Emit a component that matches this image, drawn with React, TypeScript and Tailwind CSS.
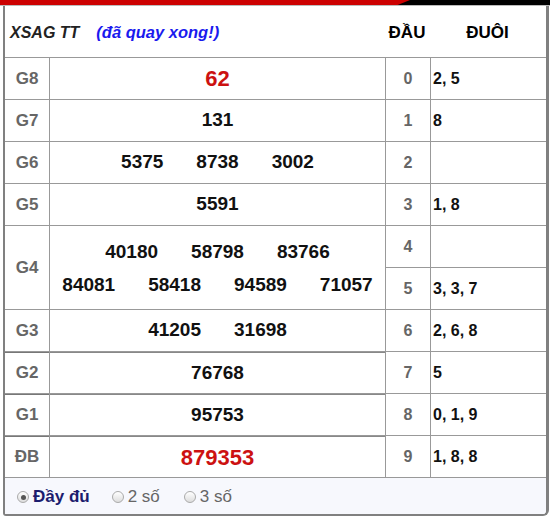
const font = "font-['Liberation_Sans',Arial,sans-serif]"

const leftRows = [
  { label: "G8", nums: ["62"], red: true },
  { label: "G7", nums: ["131"] },
  { label: "G6", nums: ["5375", "8738", "3002"] },
  { label: "G5", nums: ["5591"] },
]

const tails: [string, string][] = [
  ["0", "2, 5"],
  ["1", "8"],
  ["2", ""],
  ["3", "1, 8"],
  ["4", ""],
  ["5", "3, 3, 7"],
  ["6", "2, 6, 8"],
  ["7", "5"],
  ["8", "0, 1, 9"],
  ["9", "1, 8, 8"],
]

function Label({ text }: { text: string }) {
  return (
    <div className="bg-white flex items-center justify-center text-[17px] font-bold text-[#666]">
      {text}
    </div>
  )
}

function Nums({ nums, red }: { nums: string[]; red?: boolean }) {
  return (
    <div
      className={`bg-white flex items-center justify-center gap-[33px] font-bold ${
        red ? "text-[22px] text-[#cc1111]" : "text-[19px] text-[#111]"
      }`}
    >
      {nums.map((n) => (
        <span key={n}>{n}</span>
      ))}
    </div>
  )
}

function Radio({ checked }: { checked?: boolean }) {
  return (
    <span className="inline-flex w-[12px] h-[12px] rounded-full border border-[#aaa] bg-gradient-to-b from-white to-[#ddd] items-center justify-center mr-[4px]">
      {checked && <span className="w-[5px] h-[5px] rounded-full bg-[#555]" />}
    </span>
  )
}

export default function App() {
  return (
    <div className={`w-[550px] h-[518px] bg-white ${font}`}>
      {/* top bar */}
      <div className="h-[6px] bg-black relative border-b border-[#bbb]">
        <div className="absolute left-0 top-0 h-[5px] w-[410px] bg-[#cc0000] [clip-path:polygon(0_0,100%_0,97%_100%,0_100%)]" />
      </div>

      <div className="ml-[3px] w-[546px] h-[510px] border-l-2 border-r-[3px] border-b-2 border-[#808080] rounded-br-[6px] rounded-bl-[3px] overflow-hidden flex flex-col">
        {/* header */}
        <div className="h-[52px] flex items-center border-b border-[#999] pt-[2px]">
          <div className="w-[380px] pl-[5px] italic font-bold text-[16px]">
            <span className="text-[#222]">XSAG TT</span>
            <span className="text-[#1a1aee] ml-[17px] text-[16.5px]">(đã quay xong!)</span>
          </div>
          <div className="w-[44px] text-center font-bold text-[17px] text-black">ĐẦU</div>
          <div className="flex-1 text-center font-bold text-[17px] text-black">ĐUÔI</div>
        </div>

        {/* results */}
        <div className="grid grid-cols-[44px_335px_44px_1fr] grid-rows-[repeat(10,41px)] gap-px bg-[#999]">
          {leftRows.map((r, i) => (
            <div key={r.label} className="contents">
              <div style={{ gridRow: i + 1 }} className="col-start-1 grid">
                <Label text={r.label} />
              </div>
              <div style={{ gridRow: i + 1 }} className="col-start-2 grid">
                <Nums nums={r.nums} red={r.red} />
              </div>
            </div>
          ))}

          <div className="col-start-1 row-start-5 row-span-2 grid">
            <Label text="G4" />
          </div>
          <div className="col-start-2 row-start-5 row-span-2 bg-white flex flex-col items-center justify-center gap-[11px] pt-[2px] font-bold text-[19px] text-[#111] leading-[22px]">
            <div className="flex gap-[33px]">
              <span>40180</span>
              <span>58798</span>
              <span>83766</span>
            </div>
            <div className="flex gap-[33px]">
              <span>84081</span>
              <span>58418</span>
              <span>94589</span>
              <span>71057</span>
            </div>
          </div>

          <div className="col-start-1 row-start-7 grid">
            <Label text="G3" />
          </div>
          <div className="col-start-2 row-start-7 grid">
            <Nums nums={["41205", "31698"]} />
          </div>

          {[
            { label: "G2", nums: ["76768"] },
            { label: "G1", nums: ["95753"] },
            { label: "ĐB", nums: ["879353"], red: true },
          ].map((r, i) => (
            <div key={r.label} className="contents">
              <div style={{ gridRow: i + 8 }} className="col-start-1 grid border-t border-[#777]">
                <Label text={r.label} />
              </div>
              <div style={{ gridRow: i + 8 }} className="col-start-2 grid border-t border-[#888]">
                <Nums nums={r.nums} red={r.red} />
              </div>
            </div>
          ))}

          {tails.map(([d, t], i) => (
            <div key={d} className="contents">
              <div
                style={{ gridRow: i + 1 }}
                className="col-start-3 bg-white flex items-center justify-center font-bold text-[16px] text-[#666]"
              >
                {d}
              </div>
              <div
                style={{ gridRow: i + 1 }}
                className="col-start-4 bg-white flex items-center pl-[2px] font-bold text-[16px] text-[#111]"
              >
                {t}
              </div>
            </div>
          ))}
        </div>

        {/* footer */}
        <div className="flex-1 border-t border-[#999] bg-[#f7f8fd] flex items-center pl-[12px] pt-[2px] text-[17px]">
          <label className="flex items-center font-bold text-[#1c1c6e]">
            <Radio checked />
            Đầy đủ
          </label>
          <label className="flex items-center text-[#666] ml-[22px]">
            <Radio />
            2 số
          </label>
          <label className="flex items-center text-[#666] ml-[24px]">
            <Radio />
            3 số
          </label>
        </div>
      </div>
    </div>
  )
}
